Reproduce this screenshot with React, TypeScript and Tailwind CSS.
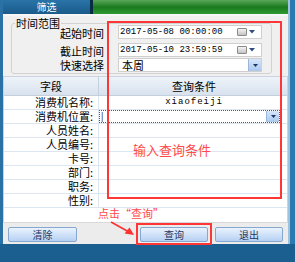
import React from "react";

const cjk = { fontFamily: '"Noto Sans CJK SC", "Noto Sans", sans-serif' };
const mono = { fontFamily: '"Liberation Mono", "DejaVu Sans Mono", monospace' };

function CalIcon() {
  return (
    <div className="flex items-center gap-[2px] mr-[6px]">
      <div className="w-[10px] h-[8px] border border-[#8a8a8a] bg-gradient-to-b from-[#f4f4f4] to-[#c4c4c4] rounded-[1px]" />
      <svg width="6" height="4" viewBox="0 0 6 4">
        <path d="M0 0 L6 0 L3 3.5 Z" fill="#2b4f80" />
      </svg>
    </div>
  );
}

function DropBtn() {
  return (
    <div className="w-[13px] h-full flex items-center justify-center bg-gradient-to-b from-[#d6e6fa] to-[#a9c8ee] border-l border-[#9ab6d8]">
      <svg width="5" height="3" viewBox="0 0 5 3">
        <path d="M0 0 L5 0 L2.5 3 Z" fill="#1f3563" />
      </svg>
    </div>
  );
}

function Btn({ label }: { label: string }) {
  return (
    <div
      className="h-[15px] flex items-center justify-center rounded-[2px] border border-[#86a7cf] bg-gradient-to-b from-[#eaf3fd] to-[#b6d1f3] text-[10px] text-[#1d3766] leading-none"
      style={cjk}
    >
      {label}
    </div>
  );
}

const rows = ["消费机名称:", "消费机位置:", "人员姓名:", "人员编号:", "卡号:", "部门:", "职务:", "性别:"];

export default function App() {
  return (
    <div className="w-[295px] h-[262px] relative overflow-hidden bg-[#1b5f90] flex" style={cjk}>
      <div className="w-[3px] h-[244px] bg-[#2a72a6]" />
      <div className="w-[285px] h-[244px] flex flex-col">
        {/* top bar */}
        <div className="h-[14px] flex">
          <div className="w-[87px] bg-gradient-to-b from-[#2a73a8] to-[#1a5b8a] text-white text-[10px] leading-[14px] text-center">
            筛选
          </div>
          <div className="w-[3px] bg-[#0b2c47]" />
          <div className="flex-1 bg-gradient-to-b from-[#58a858] via-[#187a1c] to-[#2f9a34]" />
        </div>
        <div className="h-[2px] bg-[#f7f7f7]" />
        {/* body */}
        <div className="flex-1 bg-[#f0f0f0] flex flex-col">
          <div className="h-[60px] pt-[7px] pl-[8px]">
            <div className="relative w-[261px] h-[51px] border border-[#d2d2d2] rounded-[3px] flex flex-col pt-[1px]">
              <div className="absolute -top-[7px] left-[3px] bg-[#f0f0f0] px-[1px] text-[11px] leading-[13px] text-black">
                时间范围
              </div>
              <div className="flex items-center h-[14px]">
                <div className="w-[92px] text-right text-[11px] leading-none text-black pt-[2px]">起始时间</div>
                <div className="ml-[14px] w-[144px] h-[14px] bg-white border border-[#cfcfcf] flex items-center">
                  <span className="flex-1 pl-[1px] text-[9px] leading-none text-black" style={mono}>2017-05-08 00:00:00</span>
                  <CalIcon />
                </div>
              </div>
              <div className="flex items-center h-[14px] mt-[4px]">
                <div className="w-[92px] text-right text-[11px] leading-none text-black pt-[2px]">截止时间</div>
                <div className="ml-[14px] w-[144px] h-[14px] bg-white border border-[#cfcfcf] flex items-center">
                  <span className="flex-1 pl-[1px] text-[9px] leading-none text-black" style={mono}>2017-05-10 23:59:59</span>
                  <CalIcon />
                </div>
              </div>
              <div className="flex items-center h-[14px] mt-[1px]">
                <div className="w-[92px] text-right text-[11px] leading-none text-black">快速选择</div>
                <div className="ml-[14px] w-[144px] h-[14px] bg-white border border-[#cfcfcf] flex items-center">
                  <span className="flex-1 pl-[3px] text-[11px] leading-none text-black">本周</span>
                  <DropBtn />
                </div>
              </div>
            </div>
          </div>
          {/* table */}
          <div className="h-[146px] bg-white border-t border-r border-l border-[#c9d4e0] flex flex-col">
            <div className="h-[19px] flex bg-gradient-to-b from-[#eef3f9] to-[#d8e2ee] border-b border-[#c3cfdc] text-[11px] text-black">
              <div className="w-[95px] flex items-center justify-center border-r border-[#c3cfdc]">字段</div>
              <div className="flex-1 flex items-center justify-center pl-[2px]">查询条件</div>
            </div>
            {rows.map((r, i) => (
              <div key={r} className="h-[14px] flex border-b border-[#dce6f1]">
                <div className="w-[95px] flex items-center justify-end pr-[5px] border-r border-[#dce6f1] text-[11px] leading-none text-black">
                  {r}
                </div>
                <div className="flex-1 flex items-center">
                  {i === 0 && (
                    <span className="flex-1 text-center text-[9px] leading-none tracking-[1px] text-black pl-[2px]" style={mono}>
                      xiaofeiji
                    </span>
                  )}
                  {i === 1 && (
                    <div className="w-[181px] h-[13px] border border-dotted border-[#555] flex items-center">
                      <span className="flex-1 pl-[1px] text-[9px] leading-none text-black">|</span>
                      <DropBtn />
                    </div>
                  )}
                </div>
              </div>
            ))}
          </div>
          {/* footer */}
          <div className="flex-1 bg-[#ececec] border-t border-[#d9d9d9] flex items-start pt-[4px] pl-[5px]">
            <div className="w-[69px]"><Btn label="清除" /></div>
            <div className="w-[68px] ml-[63px]"><Btn label="查询" /></div>
            <div className="w-[68px] ml-[7px]"><Btn label="退出" /></div>
          </div>
        </div>
      </div>
      <div className="w-[7px] h-[244px] flex">
        <div className="w-[2px] bg-[#9fc3dc]" />
        <div className="flex-1 bg-[#2b7bb3]" />
      </div>

      {/* annotations */}
      <div className="absolute left-[107px] top-[21px] w-[175px] h-[178px] border-2 border-[#ff3636]" />
      <div className="absolute left-[133px] top-[142px] text-[13px] leading-[16px] text-[#ff4a4a]">输入查询条件</div>
      <div className="absolute left-[98px] top-[206px] text-[11px] leading-[14px] text-[#ff4a4a]">点击“查询”</div>
      <svg className="absolute left-0 top-0" width="295" height="262" viewBox="0 0 295 262">
        <line x1="111" y1="222" x2="129" y2="232" stroke="#ff3030" strokeWidth="1.6" />
        <path d="M134 235 L124.5 233.5 L129.5 227.5 Z" fill="#ff3030" />
      </svg>
      <div className="absolute left-[136px] top-[223px] w-[76px] h-[22px] border-2 border-[#ff3636]" />
    </div>
  );
}
